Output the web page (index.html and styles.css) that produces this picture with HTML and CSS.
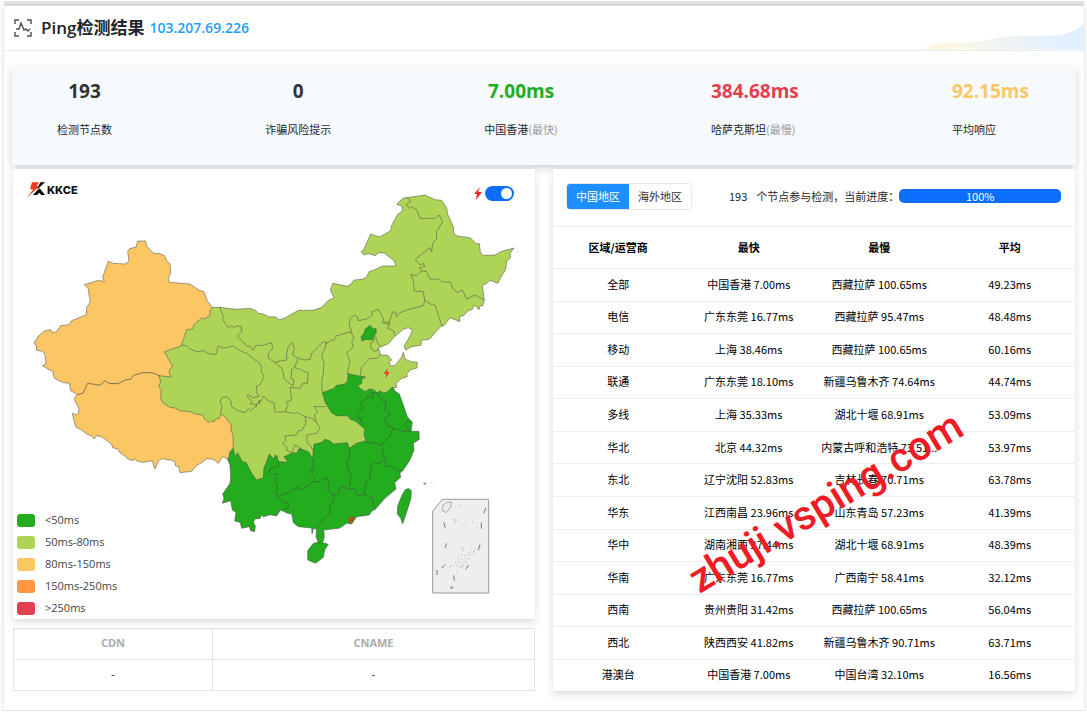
FILE: index.html
```html
<!DOCTYPE html>
<html lang="zh-CN">
<head>
    <meta charset="UTF-8">
    <meta name="viewport" content="width=device-width, initial-scale=1.0">
    <title>Ping检测结果</title>
    <link rel="stylesheet" href="styles.css">
</head>
<body>

    <div class="strip"></div>
    <main class="page">
        <header class="header">
            <svg class="scan" viewBox="0 0 18 18" aria-hidden="true">
                <path d="M1 5V1h4M13 1h4v4M17 13v4h-4M5 17H1v-4M2 10h3l2-6 3 7 2-1 2 2 2-2"/>
            </svg>
            <h1>Ping检测结果</h1>
            <a class="ip" href="#">103.207.69.226</a>
            <svg class="wave" viewBox="0 0 176 28" aria-hidden="true">
                <defs>
                    <linearGradient id="waveFill">
                        <stop offset="0.1" stop-color="#fef8e2"/>
                        <stop offset="0.85" stop-color="#e3f0ff"/>
                    </linearGradient>
                </defs>
                <path fill="url(#waveFill)" d="M0 28C20 17 38 22 58 20C76 18 84 13 110 13C140 13 160 16 176 0V28Z"/>
            </svg>
        </header>

        <section class="stats">
            <div class="stat"><strong>193</strong><span>检测节点数</span></div>
            <div class="stat"><strong>0</strong><span>诈骗风险提示</span></div>
            <div class="stat fast"><strong>7.00ms</strong><span>中国香港<em>(最快)</em></span></div>
            <div class="stat slow left"><strong>384.68ms</strong><span>哈萨克斯坦<em>(最慢)</em></span></div>
            <div class="stat avg left"><strong>92.15ms</strong><span>平均响应</span></div>
        </section>

        <div class="columns">
            <div class="column">
                <section class="map">
                    <svg class="china" viewBox="39 507 1566 1350" role="img" aria-label="中国地区延迟地图">
                        <!-- south -->
                        <path class="l1" d="M690 1345L682 1376 690 1395 692 1432 690 1450 682 1462 668 1482 672 1495 667 1510 692 1502 697 1530 708 1537 704 1563 720 1567 725 1585 748 1580 752 1592 764 1595 766 1578 760 1566 766 1556 780 1556 784 1546 792 1550 810 1544 830 1548 842 1530 862 1540 875 1542 880 1568 895 1580 935 1584 936 1602 940 1585 950 1588 948 1610 955 1627 940 1630 923 1652 923 1680 947 1690 970 1672 974 1650 985 1633 968 1628 973 1610 971 1590 1018 1585 1040 1570 1055 1572 1070 1550 1108 1545 1115 1533 1126 1528 1155 1495 1188 1467 1184 1448 1202 1432 1200 1420 1210 1410 1230 1380 1242 1350 1240 1330 1258 1318 1257 1294 1233 1294 1237 1267 1222 1250 1210 1215 1198 1182 1185 1173 1173 1150 1100 1115 1045 1100 1000 1140 955 1165 940 1300 860 1340 820 1330 760 1360Z"/>
                        <path class="l1" d="M1225 1465L1234 1472 1233 1495 1222 1530 1208 1572 1202 1555 1192 1542 1193 1518 1205 1488 1215 1470Z"/>
                        <!-- west -->
                        <path class="l3" d="M413 723L437 723 440 738 455 755 465 761 478 760 494 767 500 782 510 792 512 820 505 835 508 847 570 852 598 871 612 875 622 903 637 922 650 960 560 1100 500 1140 477 1127 455 1118 425 1119 400 1127 392 1138 375 1140 355 1151 328 1151 315 1142 300 1156 263 1150 250 1179 232 1184 212 1172 208 1150 190 1148 163 1135 158 1113 145 1108 127 1097 138 1092 134 1060 126 1054 110 1051 109 1038 102 1029 115 1008 135 992 152 989 156 997 169 996 182 977 207 974 215 962 259 944 260 923 271 905 264 865 253 854 296 841 313 845 308 831 325 784 340 790 375 792 387 783 383 755 390 745 408 742Z"/>
                        <path class="l3" d="M477 1127L455 1118 425 1119 400 1127 392 1138 375 1140 355 1151 328 1151 315 1142 300 1156 263 1150 250 1179 232 1184 223 1195 228 1210 237 1225 235 1240 228 1244 217 1240 222 1262 228 1282 242 1288 262 1303 276 1308 282 1317 290 1307 305 1310 335 1333 338 1343 355 1348 360 1358 378 1370 382 1376 398 1382 402 1376 412 1384 430 1387 458 1382 460 1395 465 1407 475 1383 485 1376 512 1380 525 1385 526 1397 536 1400 540 1418 575 1414 590 1396 605 1388 620 1376 640 1378 655 1390 668 1370 685 1378 690 1355 702 1342 704 1300 690 1230 560 1200Z"/>
                        <!-- north and centre -->
                        <path class="l2" d="M637 922L657 922 710 928 750 925 768 932 774 940 790 942 808 951 825 950 838 959 855 954 895 931 940 931 965 922 983 903 1002 893 991 870 999 850 1042 859 1052 853 1062 840 1088 838 1100 830 1107 815 1127 808 1148 798 1188 798 1183 783 1153 759 1135 758 1127 767 1105 761 1092 765 1083 756 1092 747 1112 702 1138 711 1172 692 1174 678 1193 643 1207 633 1207 619 1190 613 1210 594 1228 592 1275 585 1305 599 1325 601 1340 623 1343 643 1361 682 1360 696 1368 707 1412 714 1428 731 1438 731 1441 757 1448 766 1485 765 1502 755 1542 744 1530 760 1532 772 1520 785 1517 809 1505 827 1494 850 1470 841 1458 852 1447 855 1453 900 1448 917 1440 918 1437 929 1423 915 1417 928 1405 932 1390 947 1378 950 1380 965 1350 953 1333 976 1323 979 1305 998 1293 1013 1283 1019 1265 1020 1263 1036 1235 1040 1216 1050 1213 1037 1230 1008 1237 990 1225 983 1210 988 1185 1009 1165 1031 1135 1044 1142 1065 1162 1065 1175 1080 1168 1087 1170 1097 1184 1097 1204 1073 1210 1057 1215 1077 1233 1085 1252 1087 1251 1104 1232 1109 1220 1122 1222 1130 1205 1135 1188 1150 1190 1162 1175 1163 1165 1173 1152 1180 1140 1172 1132 1178 1120 1169 1108 1167 1095 1175 1072 1159 1085 1150 1085 1138 1097 1131 1080 1129 1045 1121 1042 1145 1032 1153 1010 1156 1000 1166 967 1178 977 1210 995 1238 1010 1247 1045 1248 1050 1258 1065 1262 1080 1275 1095 1288 1092 1305 1098 1322 1070 1330 1048 1345 1042 1328 1000 1332 992 1324 975 1318 965 1327 942 1333 938 1375 925 1355 898 1345 890 1360 880 1358 852 1370 865 1387 835 1385 832 1370 825 1365 822 1378 808 1362 800 1385 792 1403 790 1433 770 1440 755 1420 738 1387 727 1385 713 1358 705 1370 700 1345 699 1305 693 1290 694 1275 675 1250 662 1242 658 1255 645 1258 642 1266 632 1262 626 1268 612 1255 610 1245 585 1242 570 1235 540 1232 525 1224 510 1222 490 1210 482 1198 484 1170 476 1160 482 1145 477 1127 512 1131 507 1113 518 1097 502 1072 493 1055 543 1038 560 989 577 987 583 973 605 954 614 957 631 945 629 932Z"/>
                        <path class="l1" d="M1110 976L1120 988 1128 985 1129 998 1120 1008 1118 1020 1098 1018 1086 1023 1083 1010 1092 1000 1095 988Z"/>

                        <g class="border" transform="translate(480 900)">
                            <path d="M178 20L190 50 188 58 205 85 212 78 225 82 232 77 243 80 245 95 232 108 245 122 262 140 270 138 280 150 288 135 305 137 335 128 338 145 325 160 325 175 345 187"/>
                            <path d="M65 135L80 137 90 147 110 155 130 152 148 162 168 163 175 138 190 145 220 138 240 152 260 160 285 180 298 188 305 200 303 212 312 230 300 255 290 258 290 278 297 288 280 294 264 284 262 290 275 303 272 312 290 314 288 322"/>
                            <path d="M182 342L186 320 180 305 186 292 200 290 212 302 215 320 235 332 255 338 265 325 272 332 284 322 300 300 296 312 312 288 325 303 342 308 345 335 355 337 375 335 385 315 378 308 395 300 390 262"/>
                            <path d="M345 187L365 182 380 180 380 160 385 140 398 127 403 145 398 165 415 175 403 202 395 208 393 235 402 240 400 256 390 252 372 235 370 218 365 205Z"/>
                            <path d="M390 262L420 265 428 250 442 250 445 220 425 210 403 202M415 175L435 180 450 178 455 160 490 125 500 130 515 120 522 122 528 108 572 95"/>
                            <path d="M500 125L495 145 485 165 492 190 490 220 485 245 487 278M375 335L400 340 412 338 435 350 455 355 468 365 480 385 470 400 440 405 442 430 452 436 460 455"/>
                            <path d="M435 350L438 370 425 392 415 392 408 405 375 408 377 422 367 432 380 440 382 452 395 458 405 435 420 443 420 450M468 365L463 345 474 335 462 320 497 320"/>
                            <path d="M572 95L582 115 575 125 580 140 560 158 570 185 564 210 562 225M576 97L568 75 570 55 585 45 592 50 595 62 620 57 638 45 635 35 655 28 665 45 670 55 668 70 690 72"/>
                        </g>
                        <g class="border" transform="translate(780 495)">
                            <path d="M372 470L388 472 398 440 406 442 410 455 420 443 440 435 490 422 494 405 513 418 525 420 535 450 546 484M388 472L383 490 400 497 405 514M494 405L490 380 463 378 460 345 452 328 470 333 485 318 500 320 510 343 535 342 545 350 572 352 578 370 592 383 607 375 620 402 645 390 673 405"/>
                            <path d="M485 318L478 308 494 305 490 295 480 300 466 283 510 248 515 260 519 232 530 222 530 200 548 170 537 150 525 160 480 160 470 135 455 125 450 130 438 120 452 108 440 98"/>
                            <path d="M340 512L343 527 332 535 332 550 345 560 357 552M345 510L353 535 362 542M362 568L350 580 330 580 305 605 300 634"/>
                        </g>
                        <g class="border" transform="translate(630 1170)">
                            <path d="M205 212L208 228 180 235 178 247 185 254 202 252 195 275 203 280 198 310 204 322 222 338 235 338 235 355 218 358M200 320L222 312 240 305 262 290 268 300 282 295 310 275 330 275 340 266 354 266 358 290 352 302 372 315"/>
                            <path d="M308 205L311 238 300 240 312 260 315 275M418 175L420 200 412 215 412 230 423 260 418 292M372 315L388 308 386 295 398 290 420 298 433 294 437 310 445 318 463 312 468 275 480 265 482 228 496 218 510 222 524 205"/>
                            <path d="M372 315L372 330 358 352 360 370 335 392 320 415M463 312L487 322 490 345 496 358M524 205L530 228 545 228 560 240 580 242M467 157L490 158 515 165 523 182 516 190 524 205M515 165L525 150 535 145 550 115"/>
                            <path d="M463 102L450 92 455 85 442 82 445 65 462 55 450 40 470 25 473 15 490 25 485 8 505 12 508 20 520 35 528 30 525 62 540 68 535 80 524 85 530 105 550 115 580 124 603 122M603 124L585 105 592 92 605 97M320 457L332 460"/>
                        </g>

                        <path class="hot" d="M1050 1552L1056 1548 1062 1557 1058 1566 1050 1570 1044 1560Z"/>
                        <path class="bolt" d="M1163 1104L1151 1122H1159L1156 1136 1169 1116H1161Z"/>

                        <!-- South China Sea inset -->
                        <path class="inset" d="M1327 1498H1466V1779H1298V1534Z"/>
                        <g transform="translate(1230 1410)">
                            <path class="hainan" d="M99 105L111 97 125 97 121 113 108 128 97 122Z"/>
                            <path class="dashes" d="M228 113L221 130M101 157L106 173M214 158V176M109 220L106 234M210 223L205 240M81 300V315M175 285L168 298M40 40L49 39M42 42H48M65 37H67M95 295L103 285M121 354L130 352M131 316L133 332"/>
                            <path class="reefs" d="M148 105H150M155 111H157M128 148H131M135 151H138M132 158H135M140 154H142M155 163H157M164 158H166M186 156H188M198 173H200M170 192H172M155 234H159M158 241H161M183 237H185M190 244H193M176 247H178M197 239H199M153 255H155M163 257H165M173 257H175M180 252H182M188 250H190M145 266H147M154 268H156M161 270H163M170 266H172M178 267H180M135 278H137M148 275H150M157 280H159M167 277H169M120 290H123M130 287H132M139 284H141M148 289H151M154 291H157M159 287H161M106 284H108M142 302H144M138 310H140M123 348H127M122 356H125"/>
                        </g>
                    </svg>

                    <div class="logo">
                        <svg viewBox="0 0 54 48" aria-hidden="true">
                            <path fill="#f1391e" d="M15 1H36L29 13H37L0 47 19 22H9Z"/>
                            <path d="M40 1H54L36 17 30 22ZM31 25L38 19 54 39H43L37 32 30 39H18Z"/>
                        </svg>
                        <b>KKCE</b>
                    </div>
                    <label class="switch">
                        <svg viewBox="0 0 8 13" aria-hidden="true"><path d="M6 0L0 7H3L2 13 8 5H4Z"/></svg>
                        <input type="checkbox" aria-label="闪电动画" checked>
                    </label>
                    <ul class="legend">
                        <li><i class="b1"></i>&lt;50ms</li>
                        <li><i class="b2"></i>50ms-80ms</li>
                        <li><i class="b3"></i>80ms-150ms</li>
                        <li><i class="b4"></i>150ms-250ms</li>
                        <li><i class="b5"></i>&gt;250ms</li>
                    </ul>
                </section>

                <table class="cdn">
                    <thead>
                        <tr><th class="narrow">CDN</th><th>CNAME</th></tr>
                    </thead>
                    <tbody>
                        <tr><td>-</td><td>-</td></tr>
                    </tbody>
                </table>
            </div>

            <section class="result">
                <div class="toolbar">
                    <div class="tabs">
                        <button class="active">中国地区</button>
                        <button>海外地区</button>
                    </div>
                    <p><span>193</span>个节点参与检测，当前进度：</p>
                    <div class="progress" role="progressbar" aria-label="当前进度" aria-valuenow="100">
                        <div class="bar" style="width: 100%">100%</div>
                    </div>
                </div>
                <table class="regions">
                    <thead>
                        <tr><th>区域/运营商</th><th>最快</th><th>最慢</th><th>平均</th></tr>
                    </thead>
                    <tbody>
                        <tr><td>全部</td><td>中国香港 7.00ms</td><td>西藏拉萨 100.65ms</td><td>49.23ms</td></tr>
                        <tr><td>电信</td><td>广东东莞 16.77ms</td><td>西藏拉萨 95.47ms</td><td>48.48ms</td></tr>
                        <tr><td>移动</td><td>上海 38.46ms</td><td>西藏拉萨 100.65ms</td><td>60.16ms</td></tr>
                        <tr><td>联通</td><td>广东东莞 18.10ms</td><td>新疆乌鲁木齐 74.64ms</td><td>44.74ms</td></tr>
                        <tr><td>多线</td><td>上海 35.33ms</td><td>湖北十堰 68.91ms</td><td>53.09ms</td></tr>
                        <tr><td>华北</td><td>北京 44.32ms</td><td>内蒙古呼和浩特 73.51...</td><td>53.97ms</td></tr>
                        <tr><td>东北</td><td>辽宁沈阳 52.83ms</td><td>吉林长春 70.71ms</td><td>63.78ms</td></tr>
                        <tr><td>华东</td><td>江西南昌 23.96ms</td><td>山东青岛 57.23ms</td><td>41.39ms</td></tr>
                        <tr><td>华中</td><td>湖南湘西 27.44ms</td><td>湖北十堰 68.91ms</td><td>48.39ms</td></tr>
                        <tr><td>华南</td><td>广东东莞 16.77ms</td><td>广西南宁 58.41ms</td><td>32.12ms</td></tr>
                        <tr><td>西南</td><td>贵州贵阳 31.42ms</td><td>西藏拉萨 100.65ms</td><td>56.04ms</td></tr>
                        <tr><td>西北</td><td>陕西西安 41.82ms</td><td>新疆乌鲁木齐 90.71ms</td><td>63.71ms</td></tr>
                        <tr><td>港澳台</td><td>中国香港 7.00ms</td><td>中国台湾 32.10ms</td><td>16.56ms</td></tr>
                    </tbody>
                </table>
                <div class="watermark">zhuji.vsping.com</div>
            </section>
        </div>
    </main>

</body>
</html>
```
FILE: styles.css
```css
* {
    box-sizing: border-box;
}

body {
    margin: 0;
    padding: 1px 3px 0 4px;
    background-color: #fdfdfd;
    color: #212529;
    font-family: "Noto Sans CJK SC", sans-serif;
    font-size: 11px;
    line-height: 16px;
}

.strip {
    height: 5px;
    background-color: #e5e3e2;
}

.page {
    padding-bottom: 19px;
    background-color: #fff;
    border-bottom: 1px solid #e4e4e4;
    box-shadow: 0 0 4px rgba(0, 0, 0, 0.16);
}

.header {
    position: relative;
    display: flex;
    align-items: center;
    height: 45px;
    padding-left: 10px;
    border-bottom: 1px solid #ebebeb;
}

.header h1 {
    margin: 0 5px 0 9px;
    font-family: "Open Sans", "Noto Sans CJK SC", sans-serif;
    font-size: 17px;
    font-weight: 600;
}

.scan {
    width: 18px;
    height: 18px;
    fill: none;
    stroke: #555;
    stroke-width: 1.5;
}

.ip {
    color: #1e9fff;
    font-family: "Open Sans", sans-serif;
    font-size: 14px;
    font-weight: 600;
    text-decoration: none;
}

.wave {
    position: absolute;
    right: 0;
    bottom: 0;
    width: 162px;
    height: 27px;
}

.stats {
    display: flex;
    justify-content: space-between;
    height: 98px;
    margin: 16px 8px 4px;
    padding: 11px 47px 0 45px;
    background-color: #f6fafd;
    box-shadow: 0 3px 8px rgba(60, 80, 90, 0.25);
}

.stat {
    text-align: center;
}

.stat strong {
    display: block;
    margin-bottom: 17px;
    color: #333;
    font-family: "Open Sans", sans-serif;
    font-size: 19px;
    line-height: 26px;
}

.stat span {
    display: block;
}

.stat em {
    color: #999;
    font-style: normal;
}

.stat.fast strong {
    color: #23ac1d;
}

.stat.slow strong {
    color: #e2404f;
}

.stat.avg strong {
    color: #fac764;
}

.stat.left {
    text-align: left;
}

.columns {
    display: grid;
    grid-template-columns: 1fr 1fr;
    gap: 18px;
    margin: 0 9px;
}

.map,
.result {
    position: relative;
    background-color: #fff;
    box-shadow: 0 3px 8px rgba(60, 80, 90, 0.2);
}

.china {
    display: block;
    width: 100%;
}

.china path {
    stroke: rgba(70, 70, 70, 0.5);
    stroke-width: 3;
    stroke-linejoin: round;
}

.china .l1 {
    fill: #23ac1d;
}

.china .l2 {
    fill: #add457;
}

.china .l3 {
    fill: #fac764;
}

.china .border path {
    fill: none;
}

.china .hot,
.china .bolt {
    fill: #e0402d;
    stroke: none;
}

.china .hot {
    fill: #b8482b;
}

.china .inset {
    fill: #eee;
    stroke: #999;
}

.china .hainan {
    fill: none;
    stroke: #aaa;
}

.china .dashes {
    stroke: #777;
}

.china .reefs {
    stroke: #999;
}

.logo {
    position: absolute;
    top: 13px;
    left: 14px;
    display: flex;
    gap: 2px;
    color: #111;
    font-family: Inter, sans-serif;
}

.logo svg {
    width: 18px;
    height: 16px;
}

.logo b {
    font-weight: 800;
}

.switch {
    position: absolute;
    top: 17px;
    right: 21px;
    display: flex;
    align-items: center;
    gap: 3px;
}

.switch svg {
    width: 8px;
    height: 13px;
    fill: #f5222d;
}

.switch input {
    appearance: none;
    display: flex;
    justify-content: flex-end;
    width: 29px;
    height: 15px;
    margin: 0;
    padding: 2px;
    border-radius: 8px;
    background-color: #0d6efd;
}

.switch input::before {
    content: "";
    width: 11px;
    height: 11px;
    border-radius: 50%;
    background-color: #fff;
}

.legend {
    position: absolute;
    left: 4px;
    bottom: 3px;
    margin: 0;
    padding: 0;
    list-style: none;
    color: #444;
    font-family: "Open Sans", sans-serif;
}

.legend li {
    display: flex;
    align-items: center;
    gap: 10px;
    height: 16px;
    margin-top: 6px;
}

.legend i {
    width: 18px;
    height: 13px;
    border-radius: 3px;
}

.b1 { background-color: #23ac1d; }
.b2 { background-color: #add457; }
.b3 { background-color: #fac764; }
.b4 { background-color: #ff9645; }
.b5 { background-color: #e2404f; }

table {
    width: 100%;
    border-collapse: collapse;
    table-layout: fixed;
    text-align: center;
}

th,
td {
    padding: 0 0 2px;
    white-space: nowrap;
}

.cdn {
    margin-top: 9px;
}

.cdn th,
.cdn td {
    height: 31px;
    border: 1px solid #dfe3ea;
}

.cdn th {
    color: #aaa;
    font-family: "Open Sans", sans-serif;
}

.cdn .narrow {
    width: 199px;
}

.toolbar {
    display: flex;
    align-items: center;
    height: 57px;
    padding: 0 14px 3px 13px;
}

.tabs {
    display: flex;
    margin-right: 37px;
    border: 1px solid #e6e6e6;
    border-radius: 4px;
    overflow: hidden;
}

.tabs button {
    width: 62px;
    height: 25px;
    padding: 0;
    border: 0;
    background-color: #fff;
    color: #333;
    font: inherit;
}

.tabs .active {
    background-color: #1e8fff;
    color: #fff;
}

.toolbar p {
    margin: 0;
    white-space: nowrap;
}

.toolbar p span {
    margin-right: 9px;
}

.progress {
    flex: 1;
    border-radius: 5px;
    background-color: #e9ecef;
    overflow: hidden;
}

.bar {
    height: 14px;
    background-color: #0d6efd;
    color: #fff;
    line-height: 14px;
    text-align: center;
}

.regions {
    height: 465px;
    color: #000;
}

.regions th,
.regions td {
    border-top: 1px solid #eee;
}

.regions thead tr {
    height: 42px;
}

.watermark {
    position: absolute;
    top: 309px;
    left: 117px;
    color: #ee1c25;
    font-family: Roboto, sans-serif;
    font-size: 41px;
    font-weight: 500;
    line-height: 48px;
    white-space: nowrap;
    transform: rotate(-31deg);
}
```
